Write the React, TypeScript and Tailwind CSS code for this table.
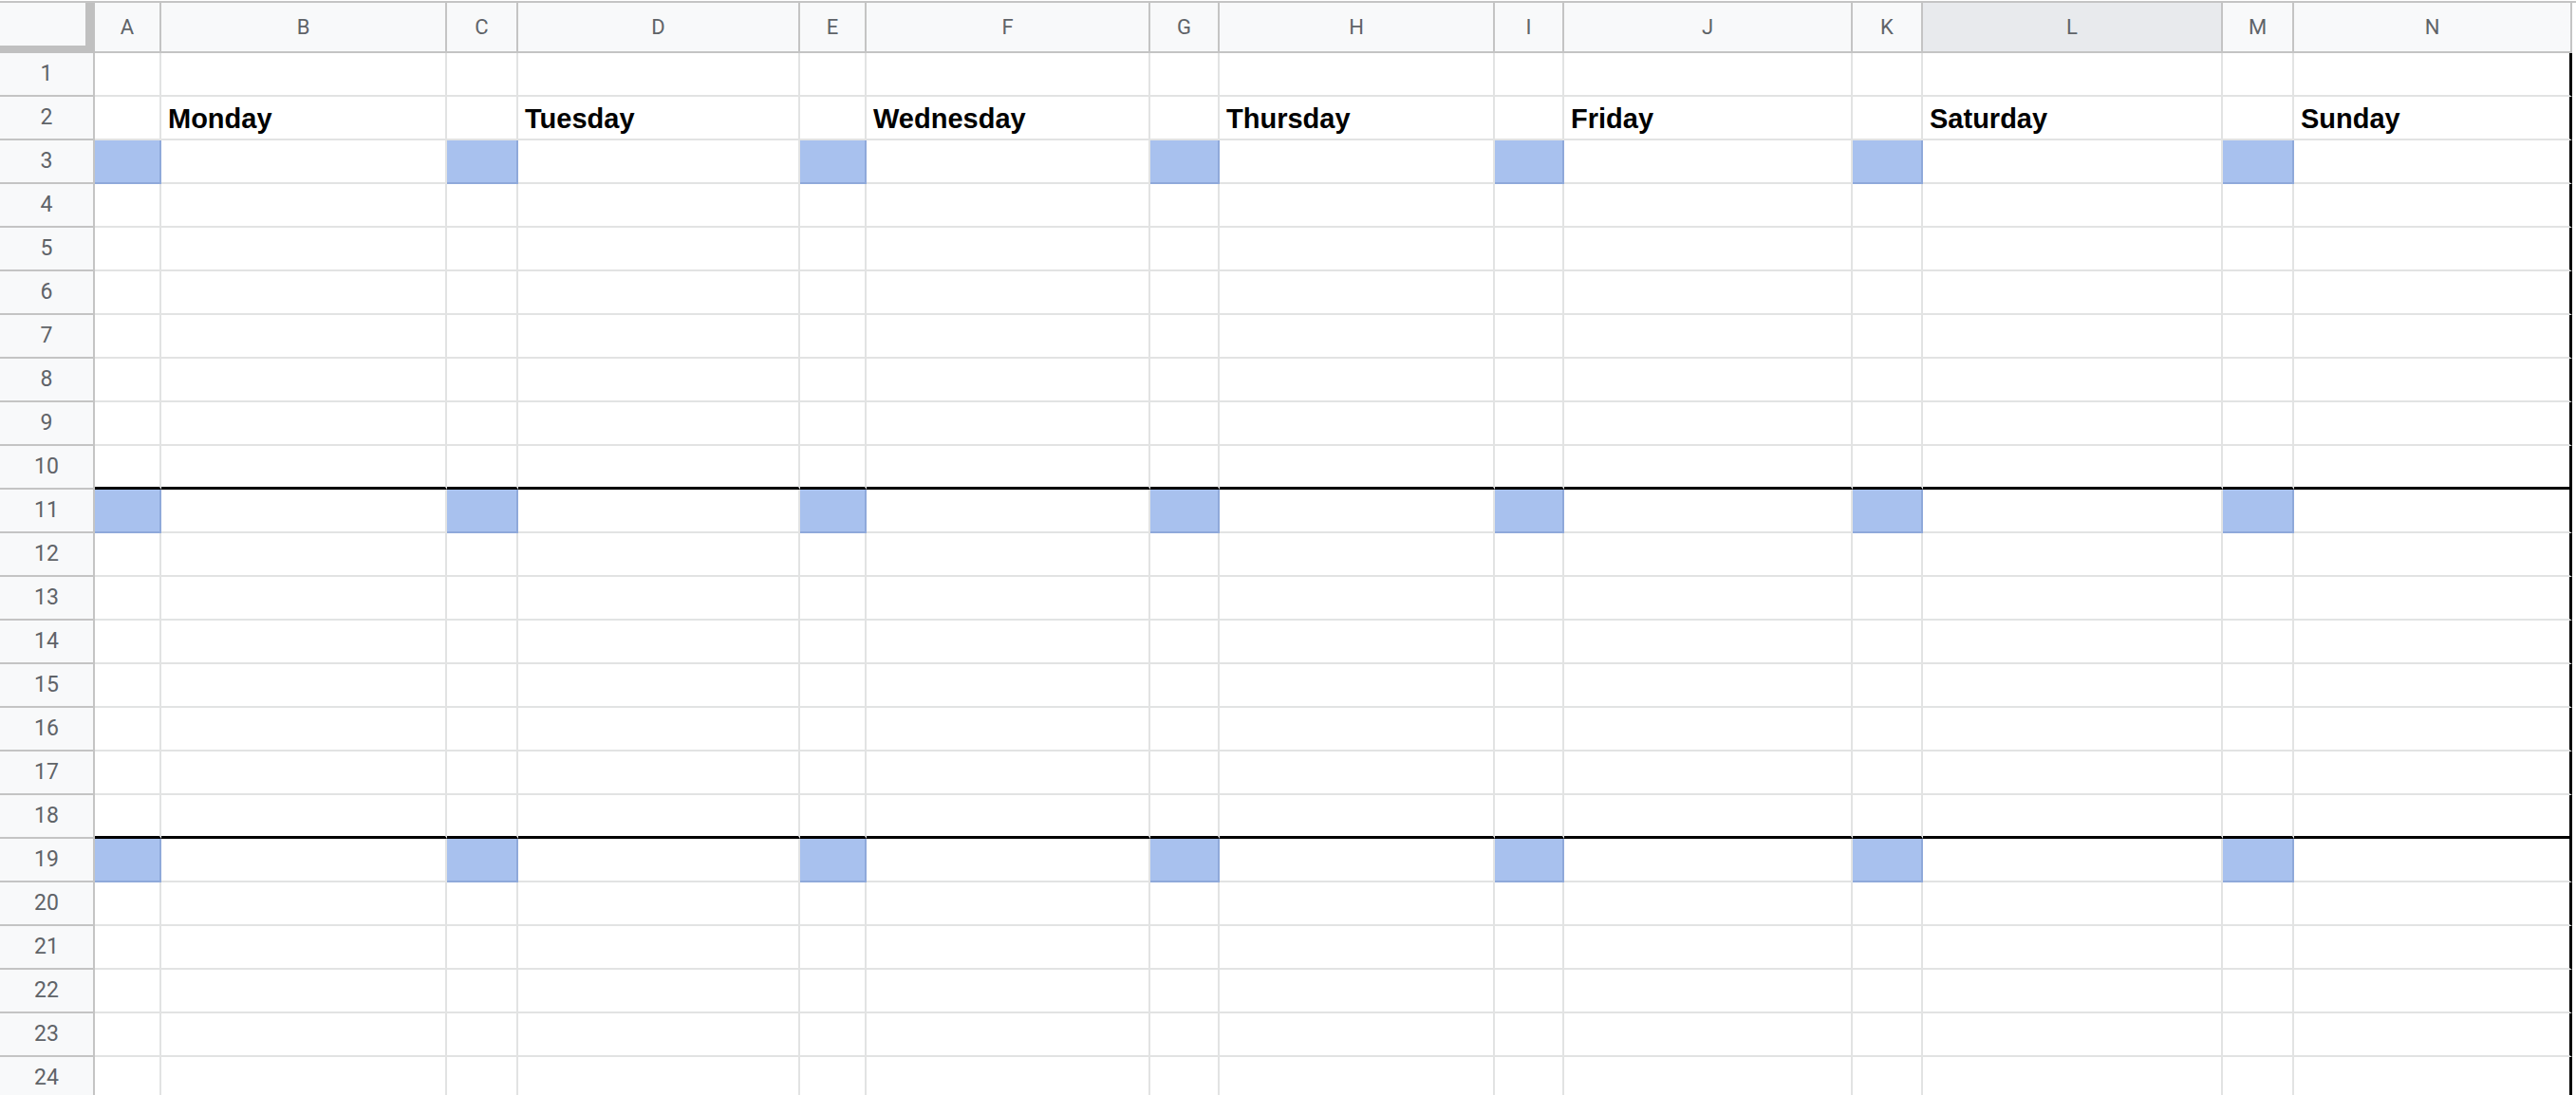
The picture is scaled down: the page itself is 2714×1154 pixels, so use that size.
const columns = ["A", "B", "C", "D", "E", "F", "G", "H", "I", "J", "K", "L", "M", "N"];

const days: Record<string, string> = {
  B: "Monday",
  D: "Tuesday",
  F: "Wednesday",
  H: "Thursday",
  J: "Friday",
  L: "Saturday",
  N: "Sunday",
};

// narrow columns get the blue marker on the first row of each week
const markerCols = ["A", "C", "E", "G", "I", "K", "M"];
const markerRows = [3, 11, 19];
// rows whose bottom edge is drawn black
const weekEnds = [10, 18];
const rowCount = 24;

function Cell({ col, row }: { col: string; row: number }) {
  const isMarker = markerCols.includes(col) && markerRows.includes(row);
  const isWeekEnd = weekEnds.includes(row);
  const isLast = col === "N";

  let cls = "h-[46px] border-r-2 border-b-2 ";
  cls += isMarker ? "bg-[#a8c1ee] border-[#8fa9da] " : "bg-white border-[#e2e3e3] ";
  if (isWeekEnd) cls += "border-b-[3px] border-b-black ";
  if (isLast) cls += "border-r-[3px] border-r-black ";

  if (row === 2 && days[col]) {
    return (
      <div className={cls + "flex items-end pl-[7px] pb-[6px]"}>
        <span className="font-['Liberation_Sans',Arial,sans-serif] text-[29px] leading-none font-bold text-black">
          {days[col]}
        </span>
      </div>
    );
  }
  return <div className={cls} />;
}

export default function App() {
  const rows = Array.from({ length: rowCount }, (_, i) => i + 1);

  return (
    <div className="h-screen overflow-hidden bg-white pt-[1px] font-['Roboto',sans-serif]">
      <div className="grid grid-cols-[100px_70px_301px_75px_297px_70px_299px_73px_290px_73px_304px_74px_316px_75px_293px] border-t-2 border-[#c4c4c4]">
        {/* corner with freeze bars */}
        <div className="h-[53px] bg-[#f8f9fa] border-r-[10px] border-b-[8px] border-[#c0c0c0]" />
        {columns.map((c) => (
          <div
            key={c}
            className={
              "h-[53px] flex items-center justify-center border-r-2 border-b-2 border-[#c4c4c4] text-[22px] text-[#5f6368] " +
              (c === "L" ? "bg-[#e8eaed]" : "bg-[#f8f9fa]")
            }
          >
            {c}
          </div>
        ))}

        {rows.map((r) => (
          <div key={r} className="contents">
            <div className="h-[46px] flex items-center justify-center bg-[#f8f9fa] border-r-2 border-b-2 border-[#c4c4c4] text-[23px] text-[#5f6368]">
              {r}
            </div>
            {columns.map((c) => (
              <Cell key={c} col={c} row={r} />
            ))}
          </div>
        ))}
      </div>
    </div>
  );
}
